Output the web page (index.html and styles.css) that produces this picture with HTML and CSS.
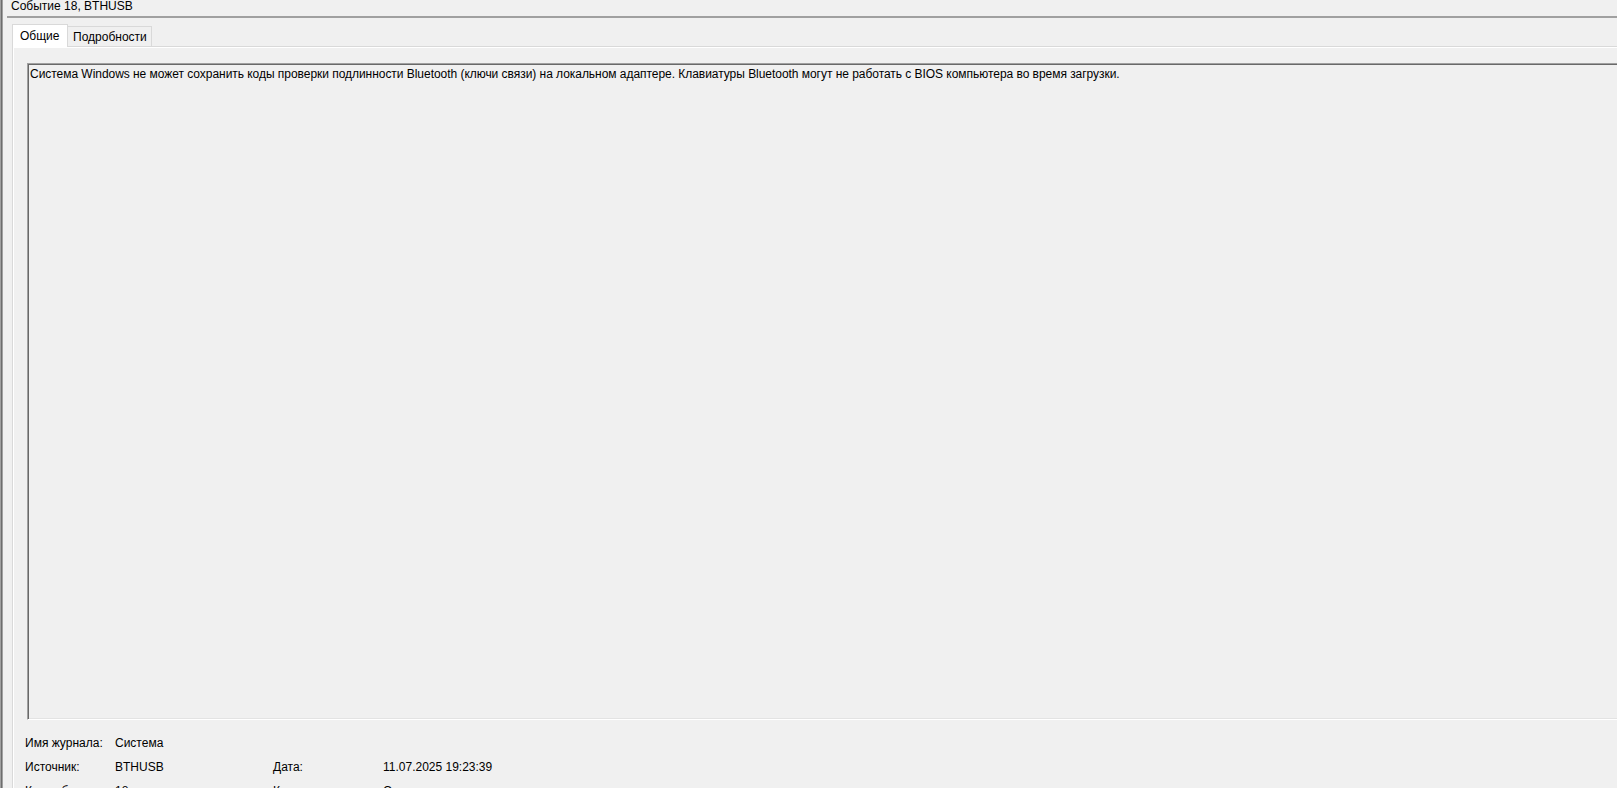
FILE: index.html
```html
<!DOCTYPE html>
<html lang="ru">
<head>
<meta charset="utf-8">
<title>Событие 18, BTHUSB</title>
<link rel="stylesheet" href="styles.css">
</head>
<body>
<div class="window">
  <div class="edge"></div>
  <div class="main">
    <div class="title">Событие 18, BTHUSB</div>
    <div class="tabs">
      <div class="tab active">Общие</div>
      <div class="tab">Подробности</div>
    </div>
    <div class="panel">
      <div class="textbox">Система Windows не может сохранить коды проверки подлинности Bluetooth (ключи связи) на локальном адаптере. Клавиатуры Bluetooth могут не работать с BIOS компьютера во время загрузки.</div>
      <div class="info">
        <div class="lbl">Имя журнала:</div><div class="val">Система</div><div></div><div></div>
        <div class="lbl">Источник:</div><div class="val">BTHUSB</div><div class="lbl">Дата:</div><div class="val">11.07.2025 19:23:39</div>
        <div class="lbl">Код события:</div><div class="val">18</div><div class="lbl">Категория задачи:</div><div class="val">Отсутствует</div>
      </div>
    </div>
  </div>
</div>
</body>
</html>
```
FILE: styles.css
```css
html, body {
  margin: 0;
  padding: 0;
  height: 788px;
  overflow: hidden;
  background: #f0f0f0;
}
body {
  font-family: "Liberation Sans", Arial, sans-serif;
  font-size: 12px;
  color: #000;
}
.window {
  display: flex;
  height: 788px;
}
.edge {
  width: 3px;
  flex: none;
  background: linear-gradient(to right, #a0a0a0 0, #a0a0a0 1px, #6d6d6d 1px, #6d6d6d 2px, #a0a0a0 2px);
}
.main {
  flex: 1;
  min-width: 0;
  padding-left: 4px;
  overflow: hidden;
}
.title {
  height: 16px;
  line-height: 12px;
  padding-left: 4px;
  border-bottom: 2px solid #a0a0a0;
  white-space: nowrap;
}
.tabs {
  display: flex;
  align-items: flex-end;
  margin-top: 6px;
  margin-left: 5px;
  height: 22px;
}
.tab {
  box-sizing: border-box;
  height: 20px;
  padding: 1px 4px 0 5px;
  line-height: 19px;
  border: 1px solid #d9d9d9;
  border-bottom: none;
  background: #f0f0f0;
  margin-left: -1px;
  white-space: nowrap;
}
.tab.active {
  position: relative;
  z-index: 1;
  margin-left: 0;
  height: 23px;
  margin-bottom: -1px;
  width: 56px;
  padding: 1px 0 0 7px;
  line-height: 20px;
  background: #fff;
}
.panel {
  margin-left: 5px;
  margin-right: -40px;
  border-top: 1px solid #d9d9d9;
  border-left: 1px solid #d9d9d9;
  box-shadow: inset 1px 1px 0 #fff;
  padding: 16px 0 0 14px;
  height: 800px;
}
.textbox {
  box-sizing: border-box;
  height: 657px;
  border: 1px solid;
  border-color: #a0a0a0 #fff #fff #a0a0a0;
  box-shadow: inset 1px 1px 0 #696969, inset -1px -1px 0 #e3e3e3;
  padding: 3px 0 0 2px;
  line-height: 15px;
  letter-spacing: -0.04px;
  white-space: nowrap;
}
.info {
  display: grid;
  grid-template-columns: 90px 158px 110px auto;
  grid-auto-rows: 24px;
  margin-top: 11px;
  margin-left: -2px;
  line-height: 24px;
  white-space: nowrap;
}
```
